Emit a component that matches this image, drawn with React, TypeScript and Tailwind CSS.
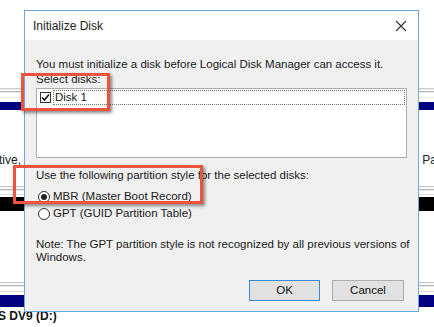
import React from 'react';

const font = { fontFamily: '"Liberation Sans", Arial, sans-serif' };

function GrayLines() {
  return (
    <div className="flex flex-col">
      <div className="h-[1px] bg-[#c8c8c8]" />
      <div className="h-[2px] bg-[#f4f4f4]" />
      <div className="h-[1px] bg-[#bdbdbd]" />
      <div className="h-[1px] bg-[#e2e2e2]" />
    </div>
  );
}

function Background() {
  return (
    <div className="flex flex-col w-[434px] h-[327px] bg-white overflow-hidden text-[12px] text-[#222]" style={font}>
      <div className="h-[88px]" />
      <GrayLines />
      <div className="h-[9px] flex flex-col justify-center">
        <div className="h-[1px] bg-[#ececec]" />
      </div>
      <div className="h-[8px] bg-[#000080]" />
      <div className="h-[43px]" />
      <div className="h-[14px] flex justify-between leading-[14px]">
        <span className="-ml-[1px]">tive, I</span>
        <span className="mr-[-3px]">Pa</span>
      </div>
      <div className="h-[19px]" />
      <GrayLines />
      <div className="h-[6px] flex flex-col justify-center">
        <div className="h-[1px] bg-[#dcdcdc]" />
      </div>
      <div className="h-[14px] bg-black" />
      <div className="h-[71px]" />
      <GrayLines />
      <div className="h-[8px] flex flex-col justify-center">
        <div className="h-[1px] bg-[#dcdcdc]" />
      </div>
      <div className="h-[12px] bg-[#000080]" />
      <div className="pt-[3px] text-[12px] font-bold leading-[13px] -ml-[2px] text-[#111]">S DV9 (D:)</div>
    </div>
  );
}

function Radio({ checked, label }: { checked?: boolean; label: string }) {
  return (
    <div className="flex items-center gap-[3px] h-[17px]">
      <span className="w-[12px] h-[12px] rounded-full border border-[#333] bg-white flex items-center justify-center">
        {checked && <span className="w-[6px] h-[6px] rounded-full bg-[#222]" />}
      </span>
      <span>{label}</span>
    </div>
  );
}

function Dialog() {
  return (
    <div
      className="absolute left-[24px] top-[10px] w-[395px] h-[302px] border border-[#6fa8dc] bg-[#f0f0f0] flex flex-col text-[11.5px] text-[#1a1a1a]"
      style={font}
    >
      <div className="h-[29px] bg-white flex items-center justify-between pl-[8px] pr-[11px]">
        <span className="text-[12px] text-[#222]">Initialize Disk</span>
        <svg width="12" height="12" viewBox="0 0 12 12">
          <path d="M1 1 L11 11 M11 1 L1 11" stroke="#333" strokeWidth="1.2" fill="none" />
        </svg>
      </div>
      <div className="flex flex-col px-[11px] pt-[17px]">
        <div className="leading-[14px]">You must initialize a disk before Logical Disk Manager can access it.</div>
        <div className="leading-[14px] mt-[1px]">Select disks:</div>
        <div className="mt-[2px] h-[70px] bg-white border border-[#adadad] pt-[1px] pl-[3px] pr-[1px]">
          <div className="flex items-center h-[15px]">
            <span className="w-[11px] h-[11px] border border-[#333] bg-white flex items-center justify-center mr-[2px]">
              <svg width="9" height="9" viewBox="0 0 9 9">
                <path d="M1 4.5 L3.5 7 L8 1.5" stroke="#111" strokeWidth="1.6" fill="none" />
              </svg>
            </span>
            <div className="flex-1 h-[15px] border border-dotted border-[#777] leading-[13px] pl-[1px]">Disk 1</div>
          </div>
        </div>
        <div className="leading-[14px] mt-[10px]">Use the following partition style for the selected disks:</div>
        <div className="mt-[6px] pl-[2px]">
          <Radio checked label="MBR (Master Boot Record)" />
          <Radio label="GPT (GUID Partition Table)" />
        </div>
        <div className="leading-[13px] mt-[16px] whitespace-nowrap">
          Note: The GPT partition style is not recognized by all previous versions of
          <br />
          Windows.
        </div>
        <div className="flex justify-end gap-[12px] mt-[16px] pr-[3px]">
          <button className="w-[71px] h-[21px] bg-[#e1e1e1] border border-[#3c8ad6] text-[#111]">OK</button>
          <button className="w-[72px] h-[21px] bg-[#e1e1e1] border border-[#adadad] text-[#111]">Cancel</button>
        </div>
      </div>
    </div>
  );
}

function Highlight({ cls }: { cls: string }) {
  return (
    <div
      className={`absolute border-[3px] border-[#ee5340] shadow-[2px_2px_3px_rgba(0,0,0,0.45)] ${cls}`}
    />
  );
}

export default function App() {
  return (
    <div className="relative w-[434px] h-[327px] overflow-hidden">
      <Background />
      <Dialog />
      <Highlight cls="left-[21px] top-[73px] w-[89px] h-[38px]" />
      <Highlight cls="left-[13px] top-[165px] w-[190px] h-[39px]" />
    </div>
  );
}
